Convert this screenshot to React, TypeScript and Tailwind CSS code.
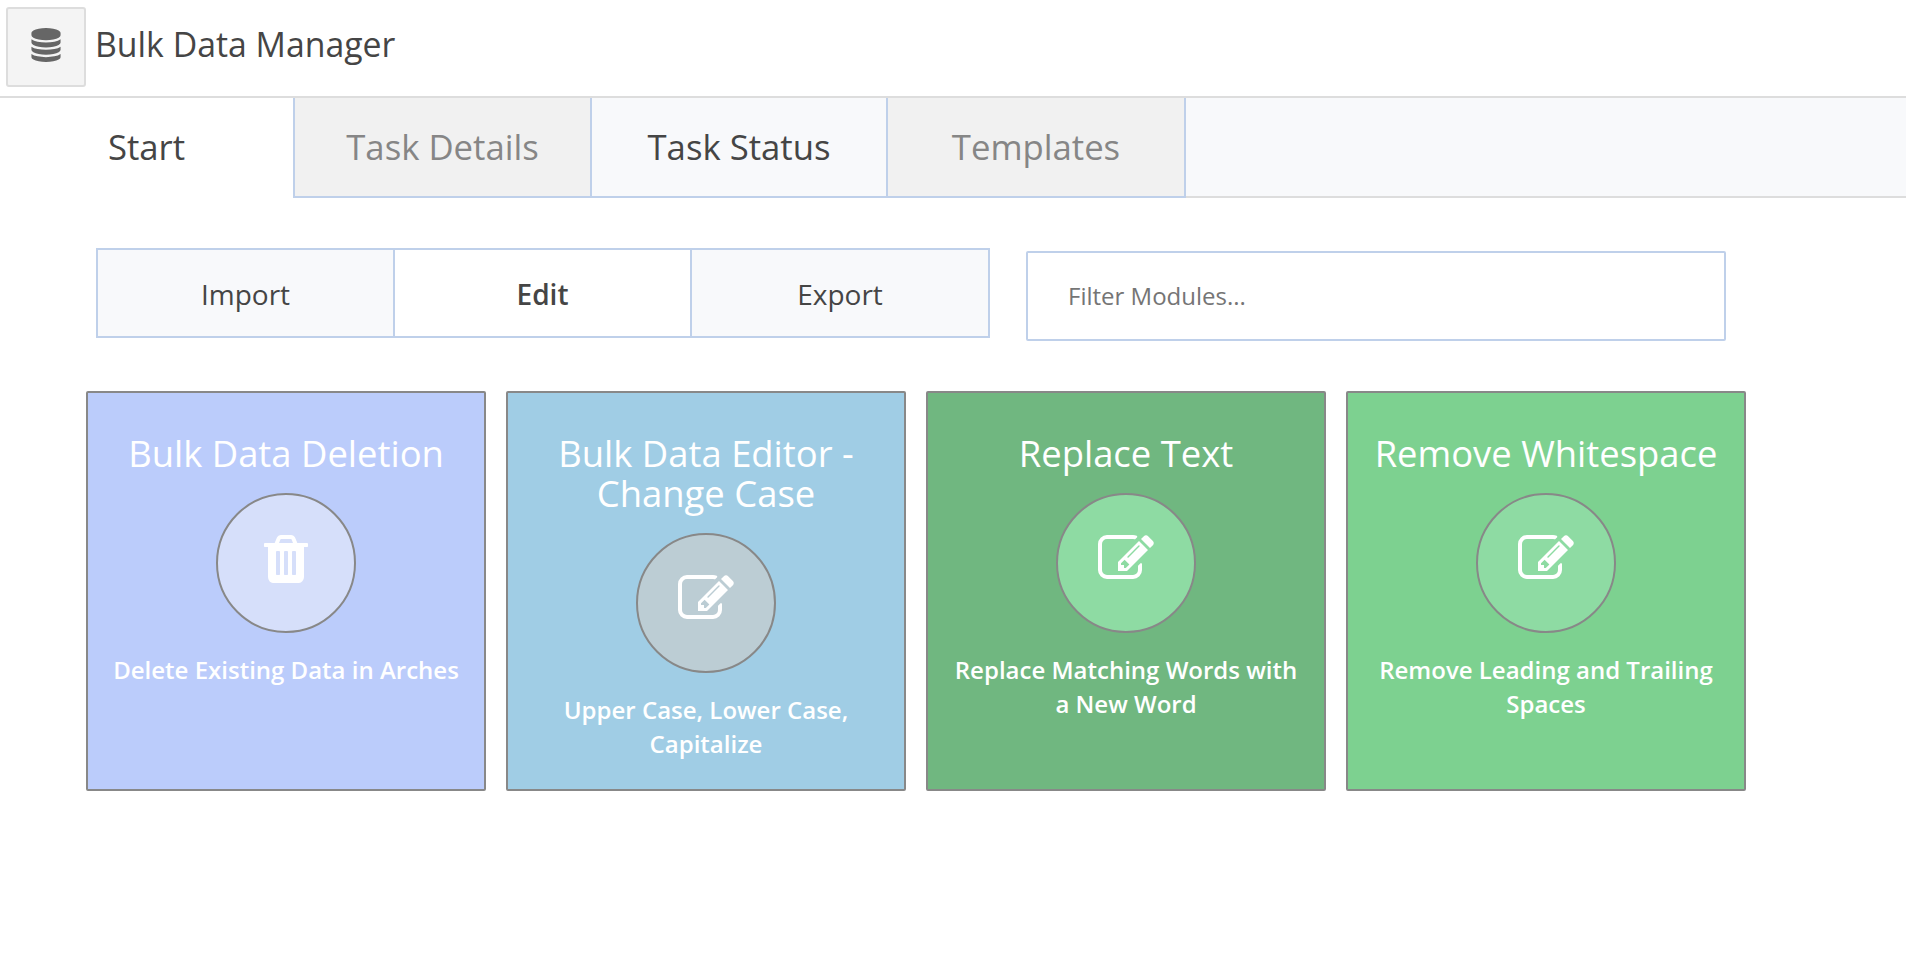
const TRASH =
  "M704 1376v-704q0-14-9-23t-23-9h-64q-14 0-23 9t-9 23v704q0 14 9 23t23 9h64q14 0 23-9t9-23zm256 0v-704q0-14-9-23t-23-9h-64q-14 0-23 9t-9 23v704q0 14 9 23t23 9h64q14 0 23-9t9-23zm256 0v-704q0-14-9-23t-23-9h-64q-14 0-23 9t-9 23v704q0 14 9 23t23 9h64q14 0 23-9t9-23zm-544-992h448l-48-117q-7-9-17-11h-317q-10 2-17 11zm928 32v64q0 14-9 23t-23 9h-96v948q0 83-47 143.5t-113 60.5h-832q-66 0-113-58.5t-47-141.5v-952h-96q-14 0-23-9t-9-23v-64q0-14 9-23t23-9h309l70-167q15-37 54-63t79-26h320q40 0 79 26t54 63l70 167h309q14 0 23 9t9 23z";
const EDIT =
  "M888 1184l116-116-152-152-116 116v56h96v96h56zm440-720q-16-16-33 1l-350 350q-17 17-1 33t33-1l350-350q17-17 1-33zm80 594v190q0 119-84.5 203.5t-203.5 84.5h-832q-119 0-203.5-84.5t-84.5-203.5v-832q0-119 84.5-203.5t203.5-84.5h832q63 0 117 25 15 7 18 23 3 17-9 29l-49 49q-14 14-32 8-23-6-45-6h-832q-66 0-113 47t-47 113v832q0 66 47 113t113 47h832q66 0 113-47t47-113v-126q0-13 9-22l64-64q15-15 35-7t20 29zm-96-738l288 288-672 672h-288v-288zm444 132l-92 92-288-288 92-92q28-28 68-28t68 28l152 152q28 28 28 68t-28 68z";
const DATABASE =
  "M896 768q237 0 443-43t325-127v170q0 69-103 128t-280 93.5-385 34.5-385-34.5-280-93.5-103-128v-170q119 84 325 127t443 43zm0 768q237 0 443-43t325-127v170q0 69-103 128t-280 93.5-385 34.5-385-34.5-280-93.5-103-128v-170q119 84 325 127t443 43zm0-384q237 0 443-43t325-127v170q0 69-103 128t-280 93.5-385 34.5-385-34.5-280-93.5-103-128v-170q119 84 325 127t443 43zm0-1152q208 0 385 34.5t280 93.5 103 128v128q0 69-103 128t-280 93.5-385 34.5-385-34.5-280-93.5-103-128v-128q0-69 103-128t280-93.5 385-34.5z";

function Icon({ path, className }: { path: string; className: string }) {
  return (
    <svg viewBox="0 0 1792 1792" fill="currentColor" className={className} aria-hidden="true">
      <path d={path} />
    </svg>
  );
}

const tabs = [
  { label: "Start", style: "w-[293px] bg-white pb-0.5" },
  { label: "Task Details", style: "w-[297px] border-l-2 border-b-2 border-[#bfd0ea] bg-[#f1f1f1] text-[#868686]" },
  { label: "Task Status", style: "w-[296px] border-l-2 border-b-2 border-[#bfd0ea] bg-[#f8f9fb]" },
  { label: "Templates", style: "w-[300px] border-x-2 border-b-2 border-[#bfd0ea] bg-[#f1f1f1] text-[#868686]" },
];

const modes = [
  { label: "Import", style: "w-[297px] border-l-2 bg-[#f8f9fb]" },
  { label: "Edit", style: "w-[297px] border-l-2 bg-white font-semibold" },
  { label: "Export", style: "w-[300px] border-x-2 bg-[#f8f9fb]" },
];

const modules = [
  { title: "Bulk Data Deletion", text: "Delete Existing Data in Arches", icon: TRASH, card: "bg-[#bbccfb]", circle: "bg-[#d6dffa]" },
  { title: "Bulk Data Editor - Change Case", text: "Upper Case, Lower Case, Capitalize", icon: EDIT, card: "bg-[#a0cde5]", circle: "bg-[#bccdd4]" },
  { title: "Replace Text", text: "Replace Matching Words with a New Word", icon: EDIT, card: "bg-[#70b780]", circle: "bg-[#8edba3]" },
  { title: "Remove Whitespace", text: "Remove Leading and Trailing Spaces", icon: EDIT, card: "bg-[#7dd190]", circle: "bg-[#8edba3]" },
];

export default function App() {
  return (
    <div className="h-[960px] w-full overflow-hidden bg-white font-['Open_Sans',sans-serif] text-[#454545]">
      <header className="flex h-[98px] items-start border-b-2 border-[#dddddd] pt-[7px] pl-1.5">
        <div className="flex size-20 items-center justify-center rounded-[3px] border-2 border-[#dddddd] bg-[#f4f4f4] text-[#666666]">
          <Icon path={DATABASE} className="mb-1 size-[34px]" />
        </div>
        <h1 className="ml-[9px] pt-[13px] text-[33.8px] leading-[48px] whitespace-nowrap">Bulk Data Manager</h1>
      </header>

      <nav className="flex h-[100px] text-[34.7px]">
        {tabs.map((t) => (
          <div key={t.label} className={`flex shrink-0 items-center justify-center ${t.style}`}>
            {t.label}
          </div>
        ))}
        <div className="grow border-b-2 border-[#dddddd] bg-[#f8f9fb]" />
      </nav>

      <div className="flex items-start pt-[50px] pl-24">
        <div className="flex h-[90px] text-[28px]">
          {modes.map((m) => (
            <button key={m.label} className={`border-y-2 border-[#bfd0ea] pt-0.5 ${m.style}`}>
              {m.label}
            </button>
          ))}
        </div>
        <input
          placeholder="Filter Modules..."
          className="mt-[3px] ml-9 h-[90px] w-[700px] rounded-[2px] border-2 border-[#bfd0ea] px-10 pb-0.5 text-2xl placeholder:text-[#757575]"
        />
      </div>

      <main className="flex gap-5 pt-[50px] pl-[86px]">
        {modules.map((m) => (
          <section
            key={m.title}
            className={`flex size-[400px] flex-col items-center rounded-[2px] border-2 border-[#888888] px-5 pt-10 text-center text-white ${m.card}`}
          >
            <h2 className="text-[36.4px] leading-10 font-normal">{m.title}</h2>
            <div className={`mt-5 flex size-[140px] shrink-0 justify-center rounded-full border-2 border-[#888888] pt-9 ${m.circle}`}>
              <Icon path={m.icon} className="size-14" />
            </div>
            <p className="mt-5 text-2xl leading-[34px] font-semibold">{m.text}</p>
          </section>
        ))}
      </main>
    </div>
  );
}
